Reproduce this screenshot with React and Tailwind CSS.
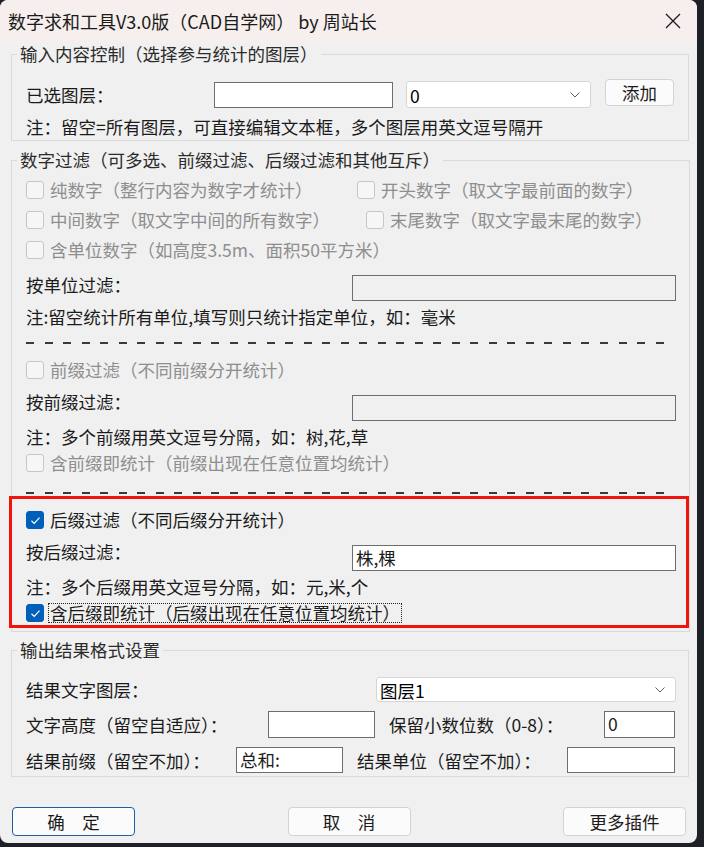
import React from 'react';

const Check = () => (
  <svg width="11" height="9" viewBox="0 0 11 9" fill="none">
    <path d="M1.5 4.8 L4.2 7.4 L9.5 1.6" stroke="white" strokeWidth="1.2" />
  </svg>
);

const CheckBox = ({ checked, disabled, label, focus }) => (
  <div className="flex items-center h-[24px] whitespace-nowrap">
    <span
      className={`w-[18px] h-[18px] shrink-0 rounded-[3px] border flex items-center justify-center ${
        checked ? 'bg-[#005fb8] border-[#005fb8]' : 'bg-[#f6f6f6] border-[#c6c6c6]'
      }`}
    >
      {checked && <Check />}
    </span>
    {focus ? (
      <span className="ml-[4px] px-[1px] h-[20px] leading-[18px] border border-dotted border-[#222] text-[#1b1b1b]">
        {label}
      </span>
    ) : (
      <span className={`ml-[6px] ${disabled ? 'text-[#8e8e8e]' : 'text-[#1b1b1b]'}`}>{label}</span>
    )}
  </div>
);

const Field = ({ w, h = 26, value, disabled, top, className = '' }) => (
  <div
    className={`shrink-0 border border-[#6e6e6e] px-[3px] ${disabled ? 'bg-[#f0f0f0]' : 'bg-white'} ${
      top ? 'leading-[20px] pt-[2px]' : 'flex items-center'
    } ${className}`}
    style={{ width: w, height: h }}
  >
    {value}
  </div>
);

const Chevron = () => (
  <svg width="10" height="6" viewBox="0 0 10 6" fill="none">
    <path d="M0.5 0.5 L5 5 L9.5 0.5" stroke="#606060" strokeWidth="1" />
  </svg>
);

const Select = ({ w, h = 27, value, className = '' }) => (
  <div
    className={`shrink-0 flex items-center justify-between bg-white border border-[#d6d6d6] rounded-[3px] pl-[3px] pr-[10px] ${className}`}
    style={{ width: w, height: h }}
  >
    <span className="pt-[2px]">{value}</span>
    <Chevron />
  </div>
);

const Dashes = ({ className = '' }) => (
  <div className={`flex justify-between items-center w-[638px] ${className}`}>
    {Array.from({ length: 35 }).map((_, i) => (
      <span key={i} className="w-[8px] h-[2px] bg-[#3a3a3a]" />
    ))}
  </div>
);

const Note = ({ children, className = '' }) => (
  <div className={`h-[20px] leading-[20px] text-[#1b1b1b] whitespace-nowrap ${className}`}>{children}</div>
);

const Group = ({ title, children, className = '' }) => (
  <fieldset className={`ml-[11px] w-[678px] border border-[#dadada] pl-[5px] ${className}`}>
    <legend className="px-[3px] leading-[24px] text-[#2b2b2b]">{title}</legend>
    {children}
  </fieldset>
);

const Button = ({ children, primary }) => (
  <div
    className={`w-[123px] h-[29px] flex items-center justify-center rounded-[4px] bg-[#fbfbfb] border ${
      primary ? 'border-[#1f5fa0]' : 'border-[#d3d3d3]'
    } text-[#1b1b1b]`}
  >
    {children}
  </div>
);

export default function App() {
  return (
    <div className="w-[704px] h-[847px] bg-[#1d2127] overflow-hidden font-['Noto_Sans_CJK_SC','Noto_Sans',sans-serif] text-[17.5px] leading-[24px]">
      <div className="w-[697px] h-[843px] rounded-[8px] overflow-hidden bg-[#f0f0f0] flex flex-col">
        {/* Title bar */}
        <div className="h-[42px] shrink-0 bg-[#f6efed] flex items-center justify-between pl-[8px] pr-[16px]">
          <span className="text-[18px] text-[#1a1a1a] whitespace-nowrap">数字求和工具V3.0版（CAD自学网） by 周站长</span>
          <svg width="16" height="16" viewBox="0 0 16 16" fill="none">
            <path d="M1 1 L15 15 M15 1 L1 15" stroke="#1a1a1a" strokeWidth="1.3" />
          </svg>
        </div>

        {/* Input control */}
        <Group title="输入内容控制（选择参与统计的图层）" className="pb-[3px]">
          <div className="pl-[9px]">
            <div className="mt-[16px] flex items-start h-[26px]">
              <span className="w-[188px] self-center text-[#1b1b1b]">已选图层：</span>
              <Field w={179} />
              <Select w={185} value="0" className="ml-[13px] -mt-[1px]" />
              <div className="ml-[14px] -mt-[3px] w-[69px] h-[27px] flex items-center justify-center rounded-[4px] bg-[#fbfbfb] border border-[#d3d3d3] text-[#1b1b1b]">
                添加
              </div>
            </div>
            <Note className="mt-[9px]">注：留空=所有图层，可直接编辑文本框，多个图层用英文逗号隔开</Note>
          </div>
        </Group>

        {/* Number filter */}
        <Group title="数字过滤（可多选、前缀过滤、后缀过滤和其他互斥）" className="mt-[7px] pb-[3px]">
          <div className="pl-[9px]">
            <div className="mt-[6px] flex">
              <div className="w-[331px]">
                <CheckBox disabled label="纯数字（整行内容为数字才统计）" />
              </div>
              <CheckBox disabled label="开头数字（取文字最前面的数字）" />
            </div>
            <div className="mt-[6px] flex">
              <div className="w-[340px]">
                <CheckBox disabled label="中间数字（取文字中间的所有数字）" />
              </div>
              <CheckBox disabled label="末尾数字（取文字最末尾的数字）" />
            </div>
            <div className="mt-[6px]">
              <CheckBox disabled label="含单位数字（如高度3.5m、面积50平方米）" />
            </div>
            <div className="mt-[11px] flex items-start">
              <span className="w-[326px] text-[#1b1b1b]">按单位过滤：</span>
              <Field w={324} disabled className="mt-[2px]" />
            </div>
            <Note className="mt-[6px]">注:留空统计所有单位,填写则只统计指定单位，如：毫米</Note>
            <Dashes className="mt-[11px] h-[10px]" />
            <div className="mt-[10px]">
              <CheckBox disabled label="前缀过滤（不同前缀分开统计）" />
            </div>
            <div className="mt-[8px] flex items-start">
              <span className="w-[326px] text-[#1b1b1b]">按前缀过滤：</span>
              <Field w={324} disabled className="mt-[5px]" />
            </div>
            <Note className="mt-[6px]">注：多个前缀用英文逗号分隔，如：树,花,草</Note>
            <div className="mt-[4px]">
              <CheckBox disabled label="含前缀即统计（前缀出现在任意位置均统计）" />
            </div>
            <Dashes className="mt-[15px] h-[6px]" />
          </div>

          {/* Highlighted suffix block */}
          <div className="-ml-[8px] w-[680px] border-[3px] border-[#f0140c] pl-[14px]">
            <div className="mt-[9px]">
              <CheckBox checked label="后缀过滤（不同后缀分开统计）" />
            </div>
            <div className="mt-[8px] flex items-start">
              <span className="w-[326px] text-[#1b1b1b]">按后缀过滤：</span>
              <Field w={324} value="株,棵" className="mt-[5px] text-[#1b1b1b]" />
            </div>
            <Note className="mt-[6px]">注：多个后缀用英文逗号分隔，如：元,米,个</Note>
            <div className="mt-[4px]">
              <CheckBox checked focus label="含后缀即统计（后缀出现在任意位置均统计）" />
            </div>
          </div>
        </Group>

        {/* Output format */}
        <Group title="输出结果格式设置" className="mt-[6px] pb-[3px]">
          <div className="pl-[9px]">
            <div className="mt-[15px] flex items-center h-[25px]">
              <span className="w-[350px] text-[#1b1b1b]">结果文字图层：</span>
              <Select w={300} h={25} value="图层1" />
            </div>
            <div className="mt-[9px] flex items-center h-[27px] whitespace-nowrap text-[#1b1b1b]">
              <span className="w-[242px]">文字高度（留空自适应）：</span>
              <Field w={107} h={27} />
              <span className="ml-[14px] w-[215px]">保留小数位数（0-8）：</span>
              <Field w={71} h={27} top value="0" />
            </div>
            <div className="mt-[9px] flex items-center h-[26px] whitespace-nowrap text-[#1b1b1b]">
              <span className="w-[210px] pt-[2px]">结果前缀（留空不加）：</span>
              <Field w={107} top value="总和:" />
              <span className="ml-[14px] w-[210px] pt-[2px]">结果单位（留空不加）：</span>
              <Field w={108} />
            </div>
          </div>
        </Group>

        {/* Buttons */}
        <div className="mt-[30px] flex justify-between pl-[12px] pr-[11px]">
          <Button primary>确　定</Button>
          <Button>取　消</Button>
          <Button>更多插件</Button>
        </div>
      </div>
    </div>
  );
}
